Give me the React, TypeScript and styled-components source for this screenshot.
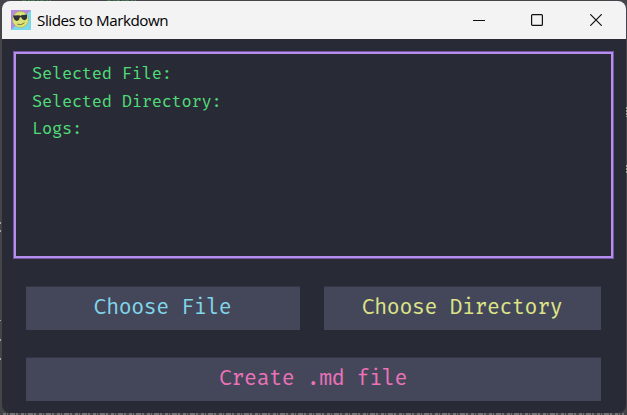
import React from "react";
import styled, { createGlobalStyle } from "styled-components";

const GlobalStyle = createGlobalStyle`
  * { box-sizing: border-box; }
  body { margin: 0; background: #454449; overflow: hidden; }
`;

const Desktop = styled.main`
  position: relative;
  width: 627px;
  height: 415px;
  padding: 1px 1px 2px 2px;
  overflow: hidden;
  background: #454449;
`;

const Window = styled.section`
  position: relative;
  height: 412px;
  display: flex;
  flex-direction: column;
  overflow: hidden;
  border-radius: 8px;
  background: #282a36;
`;

const TitleBar = styled.header`
  height: 38px;
  flex: none;
  display: flex;
  align-items: center;
  padding-left: 9px;
  background: #f3f3f3;
`;

const Title = styled.h1`
  flex: 1;
  margin: 0 0 0 6px;
  color: #000;
  font: 400 15.2px/20px "Open Sans", "Noto Sans", sans-serif;
  letter-spacing: -0.45px;
  white-space: nowrap;
`;

const Control = styled.button`
  width: 58.5px;
  height: 38px;
  display: grid;
  place-items: center;
  padding: 0;
  border: 0;
  background: transparent;
`;

const Controls = styled.div`
  display: flex;
  margin-right: 1px;
`;

const Content = styled.div`
  padding: 12px 12px 0 11px;
`;

const LogPanel = styled.div`
  height: 208px;
  padding: 9px 17px;
  border: 1px solid #75569f;
  box-shadow: inset 0 0 0 2px #b58eee;
`;

const Line = styled.p`
  height: 27.5px;
  margin: 0;
  padding-left: 1px;
  color: #50dc78;
  font: 400 16.6px/27px "Fira Code", "DejaVu Sans Mono", monospace;
  letter-spacing: -0.24px;
  white-space: pre;
`;

const Actions = styled.div`
  display: grid;
  grid-template-columns: 274px 277px;
  gap: 28px 24px;
  margin: 28px 0 0 13px;
`;

const Action = styled.button<{ $color: string; $wide?: boolean }>`
  grid-column: ${({ $wide }) => ($wide ? "1 / -1" : "auto")};
  height: 43px;
  padding: 0 1px 2px 0;
  border: 0;
  background: #44475a;
  box-shadow: 0 -0.5px 0 #3e4153;
  color: ${({ $color }) => $color};
  font: 400 21px/24px "Fira Code", "DejaVu Sans Mono", monospace;
  letter-spacing: -0.4px;
`;

const Backdrop = styled.svg`
  position: absolute;
  inset: 0;
  pointer-events: none;
`;

const AppIcon = () => (
  <svg width="20" height="20" viewBox="0 0 20 20" aria-hidden="true">
    <rect width="20" height="20" fill="#b58bdc" />
    <path d="M20 0V20H0Z" fill="#79d8ec" />
    <circle cx="9.5" cy="9.5" r="8" fill="#dce477" stroke="#a6b35d" strokeWidth=".7" />
    <path d="M2 5.5 8.4 5.3 9.2 6 10.2 5.2 16 4.5V8.2Q14.8 10.4 12.7 10.1 11 10 10.2 7.2L8.8 7.3Q8.3 10.8 5.8 10.9 3.3 10.8 2.7 8Z" fill="#30333a" />
    <path d="M6.2 14.1Q10 16 13.5 12.8" fill="none" stroke="#79773f" />
  </svg>
);

export default function App() {
  return (
    <>
      <GlobalStyle />
      <Desktop>
        <Backdrop width="627" height="415" aria-hidden="true">
          <path d="M22 .5h29M107 .5h29" stroke="#47734f" strokeDasharray="4 2 2 1" />
          <path d="M3 414h621" stroke="#aaa59f" strokeDasharray="3 1 1 2 5 1 2 3" />
          <path d="M.5 222v2M.5 230v2M.5 320v1M.5 339v2M.5 358v2M626.5 107v10M626.5 165v9" stroke="#aaa59f" strokeDasharray="2 1" />
        </Backdrop>
        <Window>
          <TitleBar>
            <AppIcon />
            <Title>Slides to Markdown</Title>
            <Controls>
              <Control aria-label="Minimize">
                <svg width="12" height="12"><path d="M0 6.5h12" stroke="#111" /></svg>
              </Control>
              <Control aria-label="Maximize">
                <svg width="12" height="12"><rect x=".6" y=".6" width="10.8" height="10.8" rx="1" fill="none" stroke="#111" strokeWidth="1.2" /></svg>
              </Control>
              <Control aria-label="Close">
                <svg width="12" height="12"><path d="m.3.3 11.4 11.4M11.7.3.3 11.7" fill="none" stroke="#111" strokeWidth="1.2" /></svg>
              </Control>
            </Controls>
          </TitleBar>
          <Content>
            <LogPanel>
              <Line>Selected File:</Line>
              <Line>Selected Directory:</Line>
              <Line>Logs:</Line>
            </LogPanel>
            <Actions>
              <Action $color="#80d5e8">Choose File</Action>
              <Action $color="#dce487">Choose Directory</Action>
              <Action $color="#eb72b9" $wide>Create .md file</Action>
            </Actions>
          </Content>
        </Window>
      </Desktop>
    </>
  );
}
